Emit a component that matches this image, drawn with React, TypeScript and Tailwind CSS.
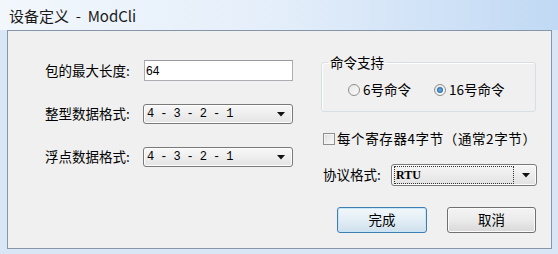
import React from 'react';

const Arrow = () => (
  <svg width="8" height="5" viewBox="0 0 8 5">
    <path d="M0 0 H8 L4 4.5 Z" fill="#111" />
  </svg>
);

interface ComboProps {
  value: string;
  focused?: boolean;
}

const Combo: React.FC<ComboProps> = ({ value, focused }) => {
  if (focused) {
    return (
      <div className="w-[146px] h-[22px] flex items-center rounded-[3px] border border-[#7a7a7a] bg-linear-to-b from-[#f6f6f6] to-[#e2e2e2] shadow-[inset_0_0_0_1px_#fcfcfc]">
        <div className="ml-[2px] h-[18px] w-[120px] flex items-center border border-dotted border-[#333] pl-[1px] font-['Liberation_Serif',serif] font-bold text-[12px] leading-none text-black">
          {value}
        </div>
        <div className="flex-1 flex items-center justify-center pl-[2px]">
          <Arrow />
        </div>
      </div>
    );
  }
  return (
    <div className="w-[150px] h-[20px] flex items-center rounded-[3px] border border-[#7a7a7a] bg-linear-to-b from-[#f8f8f8] to-[#e4e4e4] shadow-[inset_0_0_0_1px_#fdfdfd]">
      <span className="flex-1 pl-[3px] font-['Liberation_Mono',monospace] text-[12px] tracking-[-0.6px] leading-none text-black whitespace-pre">
        {value}
      </span>
      <div className="w-[22px] flex items-center justify-center">
        <Arrow />
      </div>
    </div>
  );
};

const Radio: React.FC<{ checked?: boolean }> = ({ checked }) => (
  <span className="w-[12px] h-[12px] rounded-full border border-[#8e8f8f] bg-linear-to-br from-[#e6e6e6] to-[#fbfbfb] flex items-center justify-center shrink-0">
    {checked && (
      <span className="w-[6px] h-[6px] rounded-full bg-radial from-[#6fb3e8] to-[#15508c]" />
    )}
  </span>
);

export default function App() {
  return (
    <div className="w-[558px] h-[254px] flex flex-col bg-[#d8e6f5] text-black font-['Noto_Sans_CJK_SC','Noto_Sans',sans-serif] overflow-hidden">
      <div className="h-[30px] flex items-center pl-[9px] bg-linear-to-r from-[#f2f7fc] via-[#e4eefa] to-[#c1d9f4]">
        <span className="text-[15px] leading-none text-[#1a1a1a] whitespace-pre">设备定义  -  ModCli</span>
      </div>

      <div className="ml-[7px] w-[545px] h-[219px] border border-[#8596ab] bg-[#f0f0f0] flex pl-[37px]">
        <div className="w-[248px] flex flex-col pt-[29px] gap-[23px] text-[13.5px] leading-none">
          <div className="flex items-center h-[21px]">
            <span className="w-[99px]">包的最大长度:</span>
            <div className="w-[149px] h-[21px] border border-[#abadb3] border-t-[#999ba2] bg-white flex items-center pl-[1px] font-['Liberation_Sans',sans-serif] text-[12px]">
              64
            </div>
          </div>
          <div className="flex items-center h-[20px]">
            <span className="w-[98px]">整型数据格式:</span>
            <Combo value="4 - 3 - 2 - 1" />
          </div>
          <div className="flex items-center h-[20px]">
            <span className="w-[98px]">浮点数据格式:</span>
            <Combo value="4 - 3 - 2 - 1" />
          </div>
        </div>

        <div className="ml-[28px] w-[216px] flex flex-col text-[13.5px] leading-none">
          <fieldset className="mt-[23px] w-[215px] border border-[#d5dfe5] rounded-[3px] shadow-[inset_1px_1px_0_#fff] pt-[13px] pb-[14px]">
            <legend className="ml-[6px] px-[2px] h-[16px] leading-[16px]">命令支持</legend>
            <div className="flex items-center h-[14px] pl-[26px]">
              <Radio />
              <span className="ml-[3px]">6号命令</span>
              <span className="ml-[23px]">
                <Radio checked />
              </span>
              <span className="ml-[3px]">16号命令</span>
            </div>
          </fieldset>

          <div className="mt-[19px] h-[16px] flex items-center pl-[2px]">
            <span className="w-[12px] h-[12px] border border-[#8e8f8f] bg-linear-to-br from-[#dcdcdc] to-[#fbfbfb] shadow-[inset_0_0_0_1px_#f4f4f4]" />
            <span className="ml-[2px] whitespace-nowrap tracking-[0.6px]">每个寄存器4字节（通常2字节）</span>
          </div>

          <div className="mt-[17px] h-[22px] flex items-center pl-[2px]">
            <span className="w-[68px]">协议格式:</span>
            <Combo value="RTU" focused />
          </div>

          <div className="mt-[21px] flex justify-end gap-[20px] pr-[1px]">
            <button className="w-[90px] h-[26px] rounded-[3px] border border-[#3c7fb1] bg-linear-to-b from-[#f2f8fc] via-[#e3eef6] to-[#cfe0ec] shadow-[inset_0_0_0_1px_#c8e6f8] text-[13.5px] leading-none">
              完成
            </button>
            <button className="w-[89px] h-[26px] rounded-[3px] border border-[#707070] bg-linear-to-b from-[#f4f4f4] via-[#ebebeb] to-[#d8d8d8] shadow-[inset_0_0_0_1px_#fafafa] text-[13.5px] leading-none">
              取消
            </button>
          </div>
        </div>
      </div>
    </div>
  );
}
